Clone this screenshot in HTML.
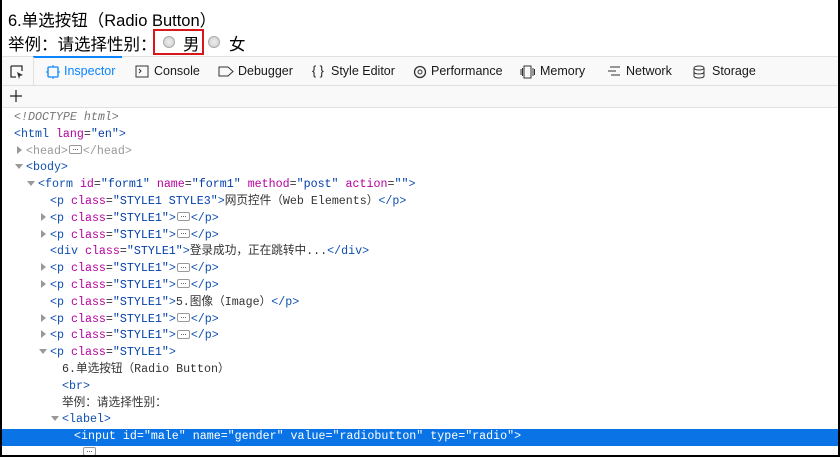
<!DOCTYPE html>
<html><head><meta charset="utf-8"><style>
*{margin:0;padding:0;box-sizing:border-box}
body{width:840px;height:457px;overflow:hidden;background:#fff;position:relative;font-family:"Liberation Sans","Noto Sans CJK SC",sans-serif}
#frame{position:absolute;left:0;top:0;width:840px;height:457px;border-left:2px solid #000;border-right:2px solid #000;border-bottom:2px solid #000}
.h{position:absolute;left:8px;font-size:16.5px;color:#000;white-space:nowrap}
.rad{position:absolute;top:36px;width:12px;height:12px;border-radius:50%;border:1px solid #aaa;background:radial-gradient(#eee,#ccc)}
#tb{position:absolute;left:2px;top:56px;width:836px;height:30px;background:#f9f9fa;border-top:1px solid #e0e0e2;border-bottom:1px solid #e0e0e2;font-size:12.5px;color:#18181a}
#tb span{position:absolute;top:7px;white-space:nowrap}
#row2{position:absolute;left:2px;top:86px;width:836px;height:22px;background:#f9f9fa;border-bottom:1px solid #e0e0e2}
#code{position:absolute;left:2px;top:110px;width:836px;font-family:"Liberation Mono","Noto Sans CJK SC",monospace;font-size:11.65px;line-height:16.8px;color:#333}
.l{position:relative;height:16.8px;white-space:pre}
.t{color:#0f4fb0}.a{color:#b5009d}.v{color:#003eaa}
.tri{position:absolute;display:block;width:0;height:0;top:2px}
.tr{border-top:4px solid transparent;border-bottom:4px solid transparent;border-left:5px solid #999}
.td{border-left:4px solid transparent;border-right:4px solid transparent;border-top:5px solid #999;top:4px}
.e{display:inline-block;width:13px;height:9px;border:1px solid #999;border-radius:2px;vertical-align:middle;margin:0 1px;position:relative;top:-1px}
.e:after{content:"";position:absolute;left:3px;top:3px;width:5px;height:1px;border-top:1px dotted #666}
.sel{background:#0a74e6;color:#fff}
.sel span{color:#fff}
</style></head><body>
<div class="h" style="top:7px">6.单选按钮（Radio Button）</div>
<div class="h" style="top:31px">举例：请选择性别：</div>
<div style="position:absolute;left:153px;top:29px;width:51px;height:26px;border:2px solid #d9161c"></div>
<span class="rad" style="left:163px"></span><div class="h" style="top:31px;left:183px">男</div>
<span class="rad" style="left:208px"></span><div class="h" style="top:31px;left:229px">女</div>
<div id="tb">
<div style="position:absolute;left:31px;top:-1px;width:89px;height:2px;background:#0a84ff"></div>
<div style="position:absolute;left:31px;top:0;width:1px;height:29px;background:#e0e0e2"></div>
<svg style="position:absolute;left:8px;top:8px" width="14" height="14"><path d="M1 1h11v5M1 1v11h5" fill="none" stroke="#333" stroke-width="1.3"/><path d="M7 7l6 3-3 1-1 3z" fill="#333"/></svg>
<svg style="position:absolute;left:44px;top:8px" width="14" height="14"><rect x="2" y="2" width="10" height="10" rx="1" fill="none" stroke="#0a84ff" stroke-width="1.3"/><path d="M7 0v2M7 12v2M0 7h2M12 7h2" stroke="#0a84ff"/></svg>
<span style="left:62px;color:#0a84ff">Inspector</span>
<svg style="position:absolute;left:133px;top:8px" width="14" height="13"><rect x="1" y="1" width="12" height="11" fill="none" stroke="#333"/><path d="M4 4l2 2-2 2" fill="none" stroke="#333"/></svg>
<span style="left:152px">Console</span>
<svg style="position:absolute;left:216px;top:9px" width="16" height="11"><path d="M1 1h9l5 4.5-5 4.5H1z" fill="none" stroke="#333"/></svg>
<span style="left:236px">Debugger</span>
<span style="left:310px">{ }</span><span style="left:329px">Style Editor</span>
<svg style="position:absolute;left:411px;top:8px" width="14" height="14"><circle cx="7" cy="7" r="5.5" fill="none" stroke="#333" stroke-width="1.3"/><circle cx="7" cy="7" r="2" fill="none" stroke="#333"/></svg>
<span style="left:429px">Performance</span>
<svg style="position:absolute;left:518px;top:8px" width="16" height="14"><rect x="4" y="1" width="7" height="12" fill="none" stroke="#333"/><path d="M1 4v6M2.5 3v8M13 3v8M14.5 4v6" stroke="#333"/></svg>
<span style="left:538px">Memory</span>
<svg style="position:absolute;left:605px;top:9px" width="14" height="12"><path d="M3 1h10M1 5h8M4 9h9" stroke="#333"/></svg>
<span style="left:624px">Network</span>
<svg style="position:absolute;left:691px;top:8px" width="12" height="14"><ellipse cx="6" cy="3" rx="5" ry="2" fill="none" stroke="#333"/><path d="M1 3v8c0 2.6 10 2.6 10 0V3M1 7c0 2.6 10 2.6 10 0" fill="none" stroke="#333"/></svg>
<span style="left:710px">Storage</span>
</div>
<div id="row2"><svg style="position:absolute;left:8px;top:4px" width="12" height="12"><path d="M6 0v12M0 6h12" stroke="#222" stroke-width="1.2"/></svg></div>
<div id="code">
<div class="l" style="padding-left:12px;color:#777;font-style:italic">&lt;!DOCTYPE html&gt;</div>
<div class="l" style="padding-left:12px"><span class="t">&lt;html</span> <span class="a">lang</span>=<span class="v">"en"</span><span class="t">&gt;</span></div>
<div class="l" style="padding-left:24px;color:#999"><i class="tri tr" style="left:15px"></i>&lt;head&gt;<span class="e"></span>&lt;/head&gt;</div>
<div class="l" style="padding-left:24px"><i class="tri td" style="left:13px"></i><span class="t">&lt;body&gt;</span></div>
<div class="l" style="padding-left:36px"><i class="tri td" style="left:25px"></i><span class="t">&lt;form</span> <span class="a">id</span>=<span class="v">"form1"</span> <span class="a">name</span>=<span class="v">"form1"</span> <span class="a">method</span>=<span class="v">"post"</span> <span class="a">action</span>=<span class="v">""</span><span class="t">&gt;</span></div>
<div class="l" style="padding-left:48px"><span class="t">&lt;p</span> <span class="a">class</span>=<span class="v">"STYLE1 STYLE3"</span><span class="t">&gt;</span>网页控件（Web Elements）<span class="t">&lt;/p&gt;</span></div>
<div class="l" style="padding-left:48px"><i class="tri tr" style="left:39px"></i><span class="t">&lt;p</span> <span class="a">class</span>=<span class="v">"STYLE1"</span><span class="t">&gt;</span><span class="e"></span><span class="t">&lt;/p&gt;</span></div>
<div class="l" style="padding-left:48px"><i class="tri tr" style="left:39px"></i><span class="t">&lt;p</span> <span class="a">class</span>=<span class="v">"STYLE1"</span><span class="t">&gt;</span><span class="e"></span><span class="t">&lt;/p&gt;</span></div>
<div class="l" style="padding-left:48px"><span class="t">&lt;div</span> <span class="a">class</span>=<span class="v">"STYLE1"</span><span class="t">&gt;</span>登录成功，正在跳转中...<span class="t">&lt;/div&gt;</span></div>
<div class="l" style="padding-left:48px"><i class="tri tr" style="left:39px"></i><span class="t">&lt;p</span> <span class="a">class</span>=<span class="v">"STYLE1"</span><span class="t">&gt;</span><span class="e"></span><span class="t">&lt;/p&gt;</span></div>
<div class="l" style="padding-left:48px"><i class="tri tr" style="left:39px"></i><span class="t">&lt;p</span> <span class="a">class</span>=<span class="v">"STYLE1"</span><span class="t">&gt;</span><span class="e"></span><span class="t">&lt;/p&gt;</span></div>
<div class="l" style="padding-left:48px"><span class="t">&lt;p</span> <span class="a">class</span>=<span class="v">"STYLE1"</span><span class="t">&gt;</span>5.图像（Image）<span class="t">&lt;/p&gt;</span></div>
<div class="l" style="padding-left:48px"><i class="tri tr" style="left:39px"></i><span class="t">&lt;p</span> <span class="a">class</span>=<span class="v">"STYLE1"</span><span class="t">&gt;</span><span class="e"></span><span class="t">&lt;/p&gt;</span></div>
<div class="l" style="padding-left:48px"><i class="tri tr" style="left:39px"></i><span class="t">&lt;p</span> <span class="a">class</span>=<span class="v">"STYLE1"</span><span class="t">&gt;</span><span class="e"></span><span class="t">&lt;/p&gt;</span></div>
<div class="l" style="padding-left:48px"><i class="tri td" style="left:37px"></i><span class="t">&lt;p</span> <span class="a">class</span>=<span class="v">"STYLE1"</span><span class="t">&gt;</span></div>
<div class="l" style="padding-left:60px">6.单选按钮（Radio Button）</div>
<div class="l" style="padding-left:60px"><span class="t">&lt;br&gt;</span></div>
<div class="l" style="padding-left:60px">举例：请选择性别：</div>
<div class="l" style="padding-left:60px"><i class="tri td" style="left:49px"></i><span class="t">&lt;label&gt;</span></div>
<div class="l sel" style="padding-left:72px"><span>&lt;input id="male" name="gender" value="radiobutton" type="radio"&gt;</span></div>
<div class="l" style="padding-left:80px"><span class="e"></span></div>
</div>
<div id="frame"></div>
</body></html>
